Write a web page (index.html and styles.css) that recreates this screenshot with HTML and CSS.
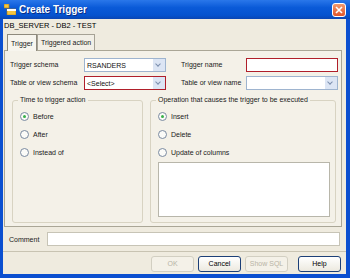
FILE: index.html
```html
<!DOCTYPE html>
<html>
<head>
    <title>Create Trigger</title>
    <link rel="stylesheet" href="styles.css">
</head>
<body>
    <div class="window">
        <div class="titlebar">
            <span class="app-icon">
                <svg width="12" height="11" viewBox="0 0 12 11">
                    <rect x="0" y="0" width="5" height="4" fill="#f4c542" stroke="#b07a10" stroke-width="0.6"/>
                    <rect x="3" y="5" width="9" height="6" fill="#f4c542" stroke="#b07a10" stroke-width="0.6"/>
                    <rect x="3" y="5" width="9" height="2" fill="#ffffff"/>
                </svg>
            </span>
            <span class="title">Create Trigger</span>
            <span class="close">
                <svg width="8" height="8" viewBox="0 0 8 8">
                    <path d="M1 1 L7 7 M7 1 L1 7" stroke="#fff" stroke-width="1.6"/>
                </svg>
            </span>
        </div>
        <div class="client">
            <div class="subtitle">DB_SERVER - DB2 - TEST</div>
            <div class="tabs">
                <div class="tab active">Trigger</div>
                <div class="tab">Triggered action</div>
            </div>
            <div class="panel">
                <div class="form">
                    <label>Trigger schema</label>
                    <div class="combo"><span>RSANDERS</span><i class="arrow"></i></div>
                    <label class="right-label">Trigger name</label>
                    <div class="textbox required"></div>

                    <label>Table or view schema</label>
                    <div class="combo required"><span>&lt;Select&gt;</span><i class="arrow"></i></div>
                    <label class="right-label">Table or view name</label>
                    <div class="combo"><span></span><i class="arrow"></i></div>
                </div>
                <div class="groups">
                    <div class="group time">
                        <div class="legend">Time to trigger action</div>
                        <div class="radio checked"><i></i>Before</div>
                        <div class="radio"><i></i>After</div>
                        <div class="radio"><i></i>Instead of</div>
                    </div>
                    <div class="group operation">
                        <div class="legend">Operation that causes the trigger to be executed</div>
                        <div class="radio checked"><i></i>Insert</div>
                        <div class="radio"><i></i>Delete</div>
                        <div class="radio"><i></i>Update of columns</div>
                        <div class="listbox"></div>
                    </div>
                </div>
            </div>
            <div class="comment-row">
                <label>Comment</label>
                <div class="textbox comment"></div>
            </div>
            <div class="buttons">
                <div class="btn disabled">OK</div>
                <div class="btn">Cancel</div>
                <div class="btn disabled">Show SQL</div>
                <div class="btn help">Help</div>
            </div>
        </div>
    </div>
</body>
</html>
```

FILE: styles.css
```css
body {
    margin: 0;
    font-family: "Liberation Sans", Arial, sans-serif;
    font-size: 7px;
    color: #1a1a1a;
    white-space: nowrap;
}

.window {
    width: 350px;
    height: 278px;
    background: #0b4fd0;
    display: flex;
    flex-direction: column;
}

.titlebar {
    height: 19px;
    display: flex;
    align-items: center;
    padding: 0 4px 0 4px;
    background: linear-gradient(#2a77ea 0%, #0a5ad8 40%, #0553cf 80%, #0a46b3 100%);
}
.app-icon {
    width: 13px;
    height: 11px;
    display: flex;
}
.title {
    flex: 1;
    color: #fff;
    font-weight: bold;
    font-size: 10px;
    margin-left: 2px;
    text-shadow: 1px 1px 0 #0a2f87;
}
.close {
    width: 14px;
    height: 14px;
    border: 1px solid #fff;
    border-radius: 3px;
    background: linear-gradient(#f29a6e, #e0552a);
    display: flex;
    align-items: center;
    justify-content: center;
    box-sizing: border-box;
}

.client {
    flex: 1;
    margin: 0 4px 4px 3px;
    background: #efebdf;
    display: flex;
    flex-direction: column;
}

.subtitle {
    height: 12px;
    line-height: 13px;
    padding-left: 1px;
    font-size: 7.5px;
    color: #000;
}

.tabs {
    display: flex;
    margin-top: 2px;
    padding-left: 4px;
    height: 17px;
    align-items: flex-end;
}
.tab {
    height: 15px;
    line-height: 15px;
    padding: 0 3px;
    border: 1px solid #a6a295;
    border-bottom: none;
    background: #f2efe6;
}
.tab.active {
    height: 17px;
    line-height: 17px;
    background: #f7f5ee;
    border-color: #8e8a7d;
    box-sizing: border-box;
    position: relative;
    top: 1px;
}

.panel {
    height: 177px;
    margin: 0 4px 0 1px;
    border: 1px solid #aaa696;
    background: #f4f1e8;
    padding: 7px 5px 0 5px;
    box-sizing: border-box;
}

.form {
    display: grid;
    grid-template-columns: 74px 82px 80px 92px;
    row-gap: 4px;
    align-items: center;
}
.form label {
    line-height: 14px;
}
.form .right-label {
    padding-left: 15px;
}

.combo, .textbox {
    height: 14px;
    box-sizing: border-box;
    border: 1px solid #9eb4cf;
    background: #fff;
    display: flex;
    align-items: center;
}
.combo span {
    flex: 1;
    padding-left: 2px;
    color: #111;
}
.combo .arrow {
    width: 12px;
    height: 12px;
    background: #dce5f4;
    display: flex;
    position: relative;
}
.combo .arrow::after {
    content: "";
    position: absolute;
    left: 3px;
    top: 3px;
    width: 3px;
    height: 3px;
    border-right: 1.2px solid #7c8fae;
    border-bottom: 1.2px solid #7c8fae;
    transform: rotate(45deg);
}
.required {
    border: 1.5px solid #b01f2a;
}

.groups {
    display: flex;
    margin-top: 10px;
    gap: 7px;
    padding-left: 2px;
}
.group {
    height: 123px;
    box-sizing: border-box;
    border: 1px solid #d8d3c2;
    border-radius: 3px;
    position: relative;
    padding: 6px 0 0 7px;
}
.group.time {
    width: 131px;
}
.group.operation {
    width: 186px;
}
.legend {
    position: absolute;
    top: -6px;
    left: 5px;
    padding: 0 2px;
    background: #f4f1e8;
    line-height: 10px;
}
.radio {
    display: flex;
    align-items: center;
    height: 18px;
}
.radio i {
    width: 9px;
    height: 9px;
    box-sizing: border-box;
    border: 1px solid #7a8aa0;
    border-radius: 50%;
    background: #fbfbf8;
    margin-right: 4px;
    display: flex;
    align-items: center;
    justify-content: center;
}
.radio.checked i::after {
    content: "";
    width: 3px;
    height: 3px;
    border-radius: 50%;
    background: #38b04a;
}

.listbox {
    width: 172px;
    height: 55px;
    box-sizing: border-box;
    border: 1px solid #b8b6aa;
    background: #fff;
    margin-top: 1px;
}

.comment-row {
    display: flex;
    align-items: center;
    margin-top: 5px;
    padding-left: 6px;
    height: 14px;
}
.comment-row label {
    width: 38px;
}
.textbox.comment {
    width: 293px;
    border-color: #c7c4b6;
}

.buttons {
    margin-top: 5px;
    border-top: 1px solid #c8c3b2;
    display: flex;
    justify-content: flex-end;
    gap: 4px;
    padding: 4px 5px 0 0;
}
.btn {
    width: 43px;
    height: 16px;
    box-sizing: border-box;
    border: 1px solid #1c3f77;
    border-radius: 3px;
    background: linear-gradient(#ffffff, #ece9df);
    text-align: center;
    line-height: 14px;
    color: #000;
}
.btn.disabled {
    border-color: #d2cfc2;
    color: #b8b4a6;
    background: #f4f1e8;
}
.btn.help {
    margin-left: 6px;
}
```
